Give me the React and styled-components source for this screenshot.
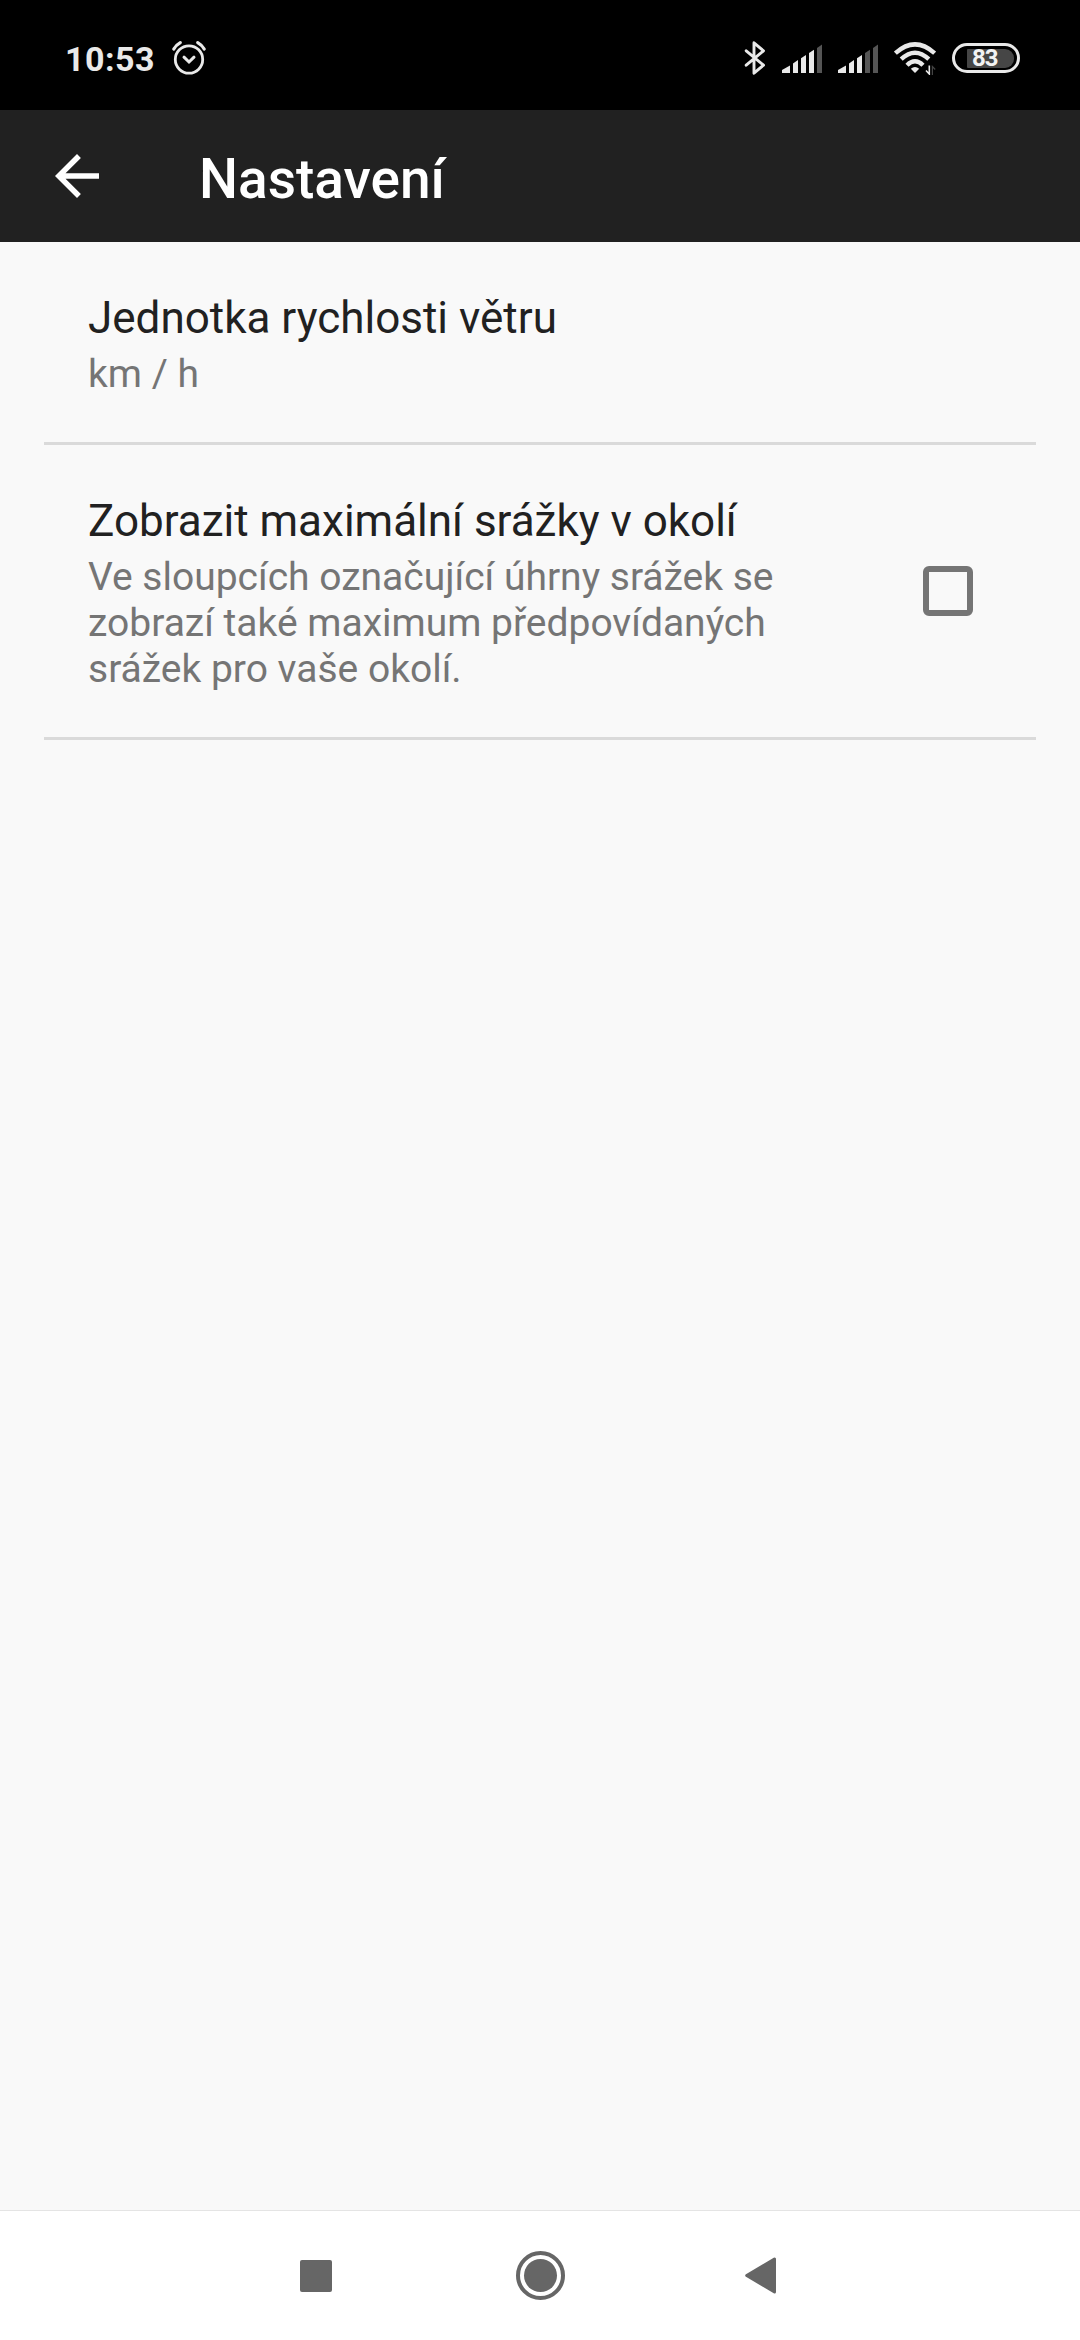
import React from "react";
import styled, { createGlobalStyle } from "styled-components";

const GlobalStyle = createGlobalStyle`
  * { box-sizing: border-box; }
  body { margin: 0; background: #f9f9f9; font-family: Roboto, "Noto Sans", sans-serif; }
`;

const Screen = styled.div`
  display: flex;
  flex-direction: column;
  width: 1080px;
  height: 2340px;
  background: #f9f9f9;
  overflow: hidden;
`;

const StatusBar = styled.header`
  display: flex;
  align-items: center;
  justify-content: space-between;
  height: 110px;
  padding: 6px 60px 0 65px;
  background: #000;
  color: #e9e9e9;
`;

const StatusGroup = styled.div`
  display: flex;
  align-items: center;
  gap: ${(p) => p.$gap}px;
`;

const Clock = styled.span`
  padding-top: 2px;
  font-size: 34px;
  line-height: 40px;
  font-weight: 700;
  letter-spacing: 0.5px;
`;

const Icon = styled.svg`
  display: block;
  flex: none;
  width: ${(p) => p.$w}px;
  height: ${(p) => p.$h}px;
`;

const Battery = styled.div`
  display: flex;
  align-items: center;
  width: 68px;
  height: 30px;
  padding: 0 2px 0 12px;
  border: 3px solid #e9e9e9;
  border-radius: 15px;
`;

const BatteryLevel = styled.div`
  display: flex;
  align-items: center;
  width: 47px;
  height: 19px;
  padding: 1px 0 0 5px;
  border-radius: 1px 9px 9px 1px;
  background: #464646;
  color: #f2f2f2;
  font-size: 24px;
  line-height: 19px;
  font-weight: 700;
  letter-spacing: -1px;
`;

const AppBar = styled.div`
  display: flex;
  align-items: center;
  height: 132px;
  padding-left: 55px;
  gap: 100px;
  background: #212121;
`;

const BackButton = styled.button`
  display: flex;
  padding: 0;
  border: 0;
  background: none;
`;

const AppTitle = styled.h1`
  margin: 6px 0 0;
  color: #fff;
  font-size: 55px;
  line-height: 64px;
  font-weight: 500;
`;

const Preferences = styled.main`
  flex: 1;
  padding: 0 44px;
`;

const Preference = styled.section`
  display: flex;
  align-items: center;
  justify-content: space-between;
  padding: 50px 63px 45px 44px;
  border-bottom: 3px solid #dadada;
`;

const PreferenceText = styled.div`
  display: flex;
  flex-direction: column;
  width: 720px;
  gap: 7px;
`;

const PreferenceTitle = styled.h2`
  margin: 0;
  color: #212121;
  font-size: 44px;
  line-height: 52px;
  font-weight: 400;
`;

const Summary = styled.p`
  margin: 0;
  color: #757575;
  font-size: 39px;
  line-height: 46px;
`;

const Checkbox = styled.span`
  flex: none;
  width: 50px;
  height: 50px;
  margin-top: -5px;
  border: 6px solid #757575;
  border-radius: 6px;
`;

const NavBar = styled.nav`
  display: grid;
  grid-template-columns: 229px 220px 220px;
  justify-content: start;
  padding-left: 201px;
  align-items: center;
  justify-items: center;
  height: 130px;
  border-top: 1px solid #e4e4e4;
  background: #fff;
`;

const NavButton = styled.button`
  display: flex;
  padding: 0;
  border: 0;
  background: none;
`;

const AlarmIcon = () => (
  <Icon $w={36} $h={36} viewBox="0 0 36 36" fill="none" stroke="#e9e9e9" strokeLinecap="round">
    <circle cx="18" cy="19.5" r="13.7" strokeWidth="2.8" />
    <path d="M13 17.2l5 4.8 5-4.8" strokeWidth="3" />
    <path d="M2.8 9Q5 5 9.3 2.6M33.2 9Q31 5 26.7 2.6" strokeWidth="3.2" />
  </Icon>
);

const BluetoothIcon = () => (
  <Icon $w={22} $h={36} viewBox="0 0 22 36" fill="none" stroke="#e9e9e9" strokeWidth="2.9" strokeLinecap="round" strokeLinejoin="round">
    <path d="M2.2 10.8L19.5 25.2L10 33.2V2.8L19.5 10.8L2.2 25.2" />
  </Icon>
);

const BARS = [
  "M0 30V27L8 22.5V30Z",
  "M11 30V20.5L16 17V30Z",
  "M19 30V15.2L24 12V30Z",
  "M27 30V10L32 6.7V30Z",
  "M35 30V5L40 1.5V30Z",
];

const SignalIcon = ({ level }) => (
  <Icon $w={40} $h={30} viewBox="0 0 40 30">
    {BARS.map((d, i) => (
      <path key={d} d={d} fill={i < level ? "#e9e9e9" : "#555"} />
    ))}
  </Icon>
);

const WifiIcon = () => (
  <Icon $w={42} $h={33} viewBox="0 0 42 33" fill="none" stroke="#e9e9e9">
    <path d="M1.4 11.2Q21-6.4 40.6 11.2" strokeWidth="4.4" />
    <path d="M7.2 17.2Q21 4.2 34.8 17.2" strokeWidth="4.4" />
    <path d="M13 23.2Q21 15.2 29 23.2" strokeWidth="4.4" />
    <path d="M21 31L16.8 26.7Q21 23.2 25.2 26.7Z" fill="#e9e9e9" stroke="none" />
    <path d="M35.3 23.5V32L32 28.5" strokeWidth="1.6" />
    <path d="M38.4 33V24.5L41.2 27.5" strokeWidth="1.2" stroke="#444" />
  </Icon>
);

export default function App() {
  return (
    <>
      <GlobalStyle />
      <Screen>
        <StatusBar>
          <StatusGroup $gap={16}>
            <Clock>10:53</Clock>
            <AlarmIcon />
          </StatusGroup>
          <StatusGroup $gap={16}>
            <BluetoothIcon />
            <SignalIcon level={4} />
            <SignalIcon level={3} />
            <WifiIcon />
            <Battery>
              <BatteryLevel>83</BatteryLevel>
            </Battery>
          </StatusGroup>
        </StatusBar>
        <AppBar>
          <BackButton aria-label="Zpět">
            <Icon $w={44} $h={44} viewBox="4 4 16 16" fill="#fff">
              <path d="M20 11H7.83l5.59-5.59L12 4l-8 8 8 8 1.41-1.41L7.83 13H20v-2z" />
            </Icon>
          </BackButton>
          <AppTitle>Nastavení</AppTitle>
        </AppBar>
        <Preferences>
          <Preference>
            <PreferenceText>
              <PreferenceTitle>Jednotka rychlosti větru</PreferenceTitle>
              <Summary>km / h</Summary>
            </PreferenceText>
          </Preference>
          <Preference>
            <PreferenceText>
              <PreferenceTitle>Zobrazit maximální srážky v okolí</PreferenceTitle>
              <Summary>
                Ve sloupcích označující úhrny srážek se zobrazí také maximum předpovídaných srážek pro vaše okolí.
              </Summary>
            </PreferenceText>
            <Checkbox role="checkbox" aria-checked="false" />
          </Preference>
        </Preferences>
        <NavBar>
          <NavButton>
            <Icon $w={32} $h={32} viewBox="0 0 32 32" fill="#666">
              <rect width="32" height="32" rx="2" />
            </Icon>
          </NavButton>
          <NavButton>
            <Icon $w={49} $h={49} viewBox="0 0 49 49">
              <circle cx="24.5" cy="24.5" r="22.5" fill="none" stroke="#666" strokeWidth="4" />
              <circle cx="24.5" cy="24.5" r="16.5" fill="#666" />
            </Icon>
          </NavButton>
          <NavButton>
            <Icon $w={31} $h={37} viewBox="0 0 31 37" fill="#666" stroke="#666" strokeWidth="3" strokeLinejoin="round">
              <path d="M1.7 18.5L29.5 2V35Z" />
            </Icon>
          </NavButton>
        </NavBar>
      </Screen>
    </>
  );
}
